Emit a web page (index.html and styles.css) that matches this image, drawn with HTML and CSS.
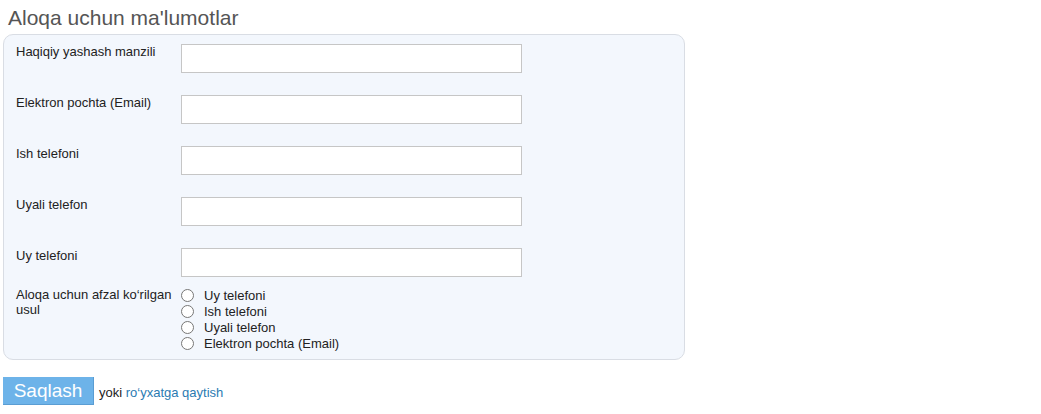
FILE: index.html
```html
<!DOCTYPE html>
<html>
  <head>
    <link rel="stylesheet" href="styles.css">
  </head>
  <body>
    <div class="page">
      <h2 class="title">Aloqa uchun ma'lumotlar</h2>
      <form class="form">
        <div class="panel">
          <div class="row">
            <label for="address">Haqiqiy yashash manzili</label>
            <input type="text" id="address" />
          </div>
          <div class="row">
            <label for="email">Elektron pochta (Email)</label>
            <input type="text" id="email" />
          </div>
          <div class="row">
            <label for="workPhone">Ish telefoni</label>
            <input type="text" id="workPhone" />
          </div>
          <div class="row">
            <label for="mobile">Uyali telefon</label>
            <input type="text" id="mobile" />
          </div>
          <div class="row">
            <label for="homePhone">Uy telefoni</label>
            <input type="text" id="homePhone" />
          </div>
          <div class="row choice">
            <label>Aloqa uchun afzal ko‘rilgan usul</label>
            <div class="options">
              <label class="option"><input type="radio" name="contact" /> Uy telefoni</label>
              <label class="option"><input type="radio" name="contact" /> Ish telefoni</label>
              <label class="option"><input type="radio" name="contact" /> Uyali telefon</label>
              <label class="option"><input type="radio" name="contact" /> Elektron pochta (Email)</label>
            </div>
          </div>
        </div>
        <div class="actions">
          <button type="button" class="save">Saqlash</button>
          <span>yoki <a href="#">ro‘yxatga qaytish</a></span>
        </div>
      </form>
    </div>
  </body>
</html>
```

FILE: styles.css
```css
body {
  margin: 0;
  padding: 0;
  background-color: #fff;
  font-family: "Liberation Sans", Arial, sans-serif;
  font-size: 13px;
  color: #222;
}
.page {
  padding: 6px 3px;
}
.title {
  margin: 0 0 4px 5px;
  font-size: 21px;
  font-weight: normal;
  line-height: 24px;
  color: #555;
}
.panel {
  width: 668px;
  padding: 9px 0 8px 12px;
  background-color: #f3f7fd;
  border: 1px solid #d9dde4;
  border-radius: 10px;
}
.row {
  display: flex;
  align-items: flex-start;
  padding-bottom: 22px;
}
.row > label {
  width: 165px;
  flex-shrink: 0;
  line-height: 15px;
  color: #222;
}
.row input[type="text"] {
  width: 341px;
  height: 29px;
  box-sizing: border-box;
  margin: 0;
  border: 1px solid #c6c6c6;
  background-color: #fff;
}
.row.choice {
  margin-top: -12px;
  padding-bottom: 0;
}
.options {
  display: flex;
  flex-direction: column;
}
.option {
  display: flex;
  align-items: center;
  height: 16px;
}
.option input {
  width: 13px;
  height: 13px;
  margin: 0 10px 0 0;
}
.actions {
  display: flex;
  align-items: center;
  margin-top: 17px;
}
.save {
  width: 91px;
  height: 28px;
  margin: 0 5px 0 0;
  padding: 0;
  border: none;
  border-right: 1px solid #5a9dd3;
  border-bottom: 1px solid #5a9dd3;
  background-color: #6db3e9;
  color: #fff;
  font-family: "Liberation Sans", Arial, sans-serif;
  font-size: 19px;
}
.actions span {
  padding-top: 3px;
}
.actions a {
  color: #2b7bb2;
  text-decoration: none;
}
```
